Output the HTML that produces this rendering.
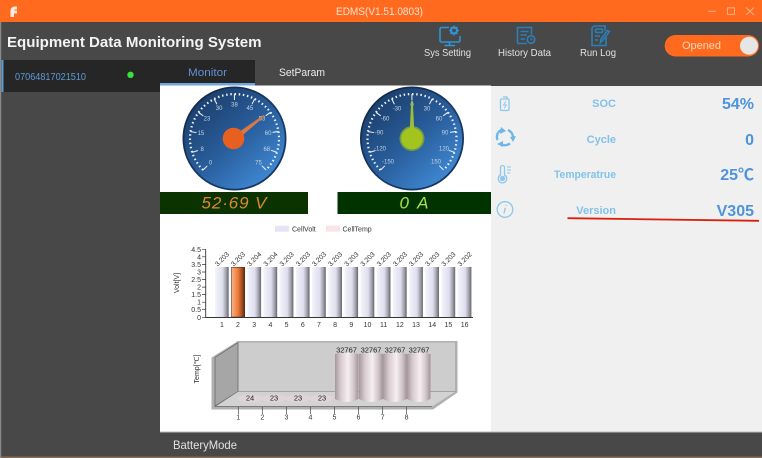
<!DOCTYPE html>
<html><head><meta charset="utf-8"><style>
html,body{margin:0;padding:0;background:#484848;overflow:hidden}
svg{display:block;filter:blur(.35px)}
text{font-family:"Liberation Sans",sans-serif}
.c{font-size:7px;fill:#333}
.m{text-anchor:middle}
.e{text-anchor:end}
.g{font-size:6px;fill:#c6d4e4;text-anchor:middle}
.l{font-size:11px;font-weight:bold;fill:#82c2ea;text-anchor:end}
.v{font-size:16px;font-weight:bold;fill:#4d94dc;text-anchor:end}
.n{font-size:10.5px;fill:#e2e2e2;text-anchor:middle}
</style></head><body>
<svg width="762" height="458" viewBox="0 0 762 458" xmlns="http://www.w3.org/2000/svg">
<defs>
<linearGradient id="gi" x1="0.15" y1="0.1" x2="0.85" y2="0.9"><stop offset="0" stop-color="#1c3f6c"/><stop offset="0.5" stop-color="#285c9a"/><stop offset="1" stop-color="#3f88d2"/></linearGradient>
<linearGradient id="go" x1="0.15" y1="0.1" x2="0.85" y2="0.9"><stop offset="0" stop-color="#12294a"/><stop offset="0.6" stop-color="#1b3c68"/><stop offset="1" stop-color="#16345e"/></linearGradient>
<linearGradient id="bar"><stop offset="0" stop-color="#f4f4fc"/><stop offset="0.55" stop-color="#dedeee"/><stop offset="0.8" stop-color="#a4a4b0"/><stop offset="1" stop-color="#66666e"/></linearGradient>
<linearGradient id="bar2"><stop offset="0" stop-color="#f8b488"/><stop offset="0.5" stop-color="#ee7a3a"/><stop offset="0.8" stop-color="#a04c20"/><stop offset="1" stop-color="#5a2a10"/></linearGradient>
<linearGradient id="cy"><stop offset="0" stop-color="#a8989c"/><stop offset="0.25" stop-color="#d8ccd0"/><stop offset="0.55" stop-color="#f6eef1"/><stop offset="0.8" stop-color="#d2c6ca"/><stop offset="1" stop-color="#a09498"/></linearGradient>
<g id="gb">
<circle r="52" fill="url(#go)"/>
<circle r="50.2" fill="url(#gi)"/>
<path d="M-31.5 31.5A44.5 44.5 0 1 1 31.5 31.5" pathLength="270" fill="none" stroke="#eef3f8" stroke-width="2.2" stroke-dasharray="1.9 3.5"/>
<circle r="41.5" fill="none" stroke="#eef3f8" stroke-width="6" pathLength="360" transform="rotate(134.2)" stroke-dasharray="1.4 25.6 1.4 25.6 1.4 25.6 1.4 25.6 1.4 25.6 1.4 25.6 1.4 25.6 1.4 25.6 1.4 25.6 1.4 25.6 1.4 88.6"/>
</g>
</defs>

<rect width="762" height="458" fill="#484848"/>
<rect y="456.5" width="762" height="1.5" fill="#8a6a55"/>
<rect width="762" height="22" fill="#ff6a1f"/>
<rect y="22" width="1.2" height="436" fill="#8a8a8a"/>

<path d="M10.5 17V11C10.5 8 12.5 6.5 15 6.5H17V9.5H15C14.2 9.5 14 10 14 10.5H17V13.5H14V17Z" fill="#fbeee0"/>
<text x="379.5" y="15" class="m" font-size="11" fill="#ffe2ce" textLength="87" lengthAdjust="spacingAndGlyphs">EDMS(V1.51.0803)</text>
<path d="M708 11.3H716" stroke="#ffb088" stroke-width="1"/>
<rect x="727.5" y="7.8" width="7" height="6.6" fill="none" stroke="#ffb088" stroke-width="1"/>
<path d="M746 7.5L754 15M754 7.5L746 15" stroke="#ffb088" stroke-width="1"/>

<text x="7" y="47" font-size="15.2" font-weight="bold" fill="#f4f4f4" textLength="254.5" lengthAdjust="spacingAndGlyphs">Equipment Data Monitoring System</text>

<!-- toolbar icons -->
<g fill="none" stroke="#2f96d6" stroke-width="1.6">
<path d="M449 27.5H441.5A1.5 1.5 0 0 0 440 29V40.5A1.5 1.5 0 0 0 441.5 42H458.5A1.5 1.5 0 0 0 460 40.5V36"/>
<path d="M449.5 42V45M444.5 45.5H455"/>
<circle cx="454" cy="30.5" r="3" stroke-width="2.2"/>
<path d="M454 25.5V27M454 34V35.5M449 30.5H450.5M457.5 30.5H459M450.5 27L451.6 28.1M456.4 32.9L457.5 34M457.5 27L456.4 28.1M451.6 32.9L450.5 34" stroke-width="1.3"/>
<g stroke="#2a7fb6">
<path d="M517.5 43.5V27.5H531.5V34.5M517.5 43.5H527"/>
<path d="M520.5 31.5H528.5M520.5 35H527M520.5 39H525"/>
<circle cx="531" cy="39.5" r="3.8"/>
<path d="M531 37.5V39.7H532.8" stroke-width="1"/>
<path d="M592 28V45.5H606V37M592 28Q593 26 596 26H605V31"/>
<rect x="595.5" y="29" width="7" height="3.4" rx="1"/>
<path d="M609.5 31.5L603 40L600.5 42.5L601 39L607.5 30.5Z"/>
<path d="M595 36H600M595 40H598"/>
</g>
</g>
<text x="447.5" y="56" class="n" textLength="47" lengthAdjust="spacingAndGlyphs">Sys Setting</text>
<text x="524.5" y="56" class="n" textLength="53" lengthAdjust="spacingAndGlyphs">History Data</text>
<text x="598" y="56" class="n" textLength="36" lengthAdjust="spacingAndGlyphs">Run Log</text>

<rect x="664.7" y="35" width="94.3" height="21.5" rx="10.75" fill="#ff6a1f"/>
<circle cx="749" cy="45.7" r="9" fill="#e6e6e6"/>
<text x="701.5" y="49" class="m" font-size="11" fill="#ffd8bc" textLength="39" lengthAdjust="spacingAndGlyphs">Opened</text>

<!-- sidebar & tabs -->
<rect x="1.5" y="60" width="158.5" height="32" fill="#262626"/>
<rect x="160" y="60" width="95" height="24" fill="#262626"/>
<rect x="1.5" y="60" width="2" height="32" fill="#5b9bd5"/>
<text x="15" y="80" font-size="10" fill="#5b9bd5" textLength="71" lengthAdjust="spacingAndGlyphs">07064817021510</text>
<circle cx="130.5" cy="74.8" r="3.2" fill="#3be03b"/>
<text x="207.5" y="76" class="m" font-size="11" fill="#5e92d4" textLength="39" lengthAdjust="spacingAndGlyphs">Monitor</text>
<text x="302" y="76" class="m" font-size="11" fill="#ececec" textLength="46" lengthAdjust="spacingAndGlyphs">SetParam</text>

<!-- content -->
<rect x="160" y="85.5" width="331" height="346.5" fill="#fff"/>
<rect x="160" y="83" width="95" height="2.5" fill="#6fa5dc"/>
<rect x="491" y="86" width="271" height="346" fill="#f0f0f0"/>
<rect x="160" y="431.5" width="602" height="1" fill="#bdbdbd"/>
<text x="205" y="449" class="m" font-size="12" fill="#e2e2e2" textLength="64" lengthAdjust="spacingAndGlyphs">BatteryMode</text>

<!-- gauge 1 -->
<g transform="translate(234.5 138.5)">
<use href="#gb"/>
<text class="g" x="-24" y="26">0</text><text class="g" x="-32.3" y="12.5">8</text><text class="g" x="-33.6" y="-3.3">15</text><text class="g" x="-27.5" y="-18">23</text><text class="g" x="-15.4" y="-28.3">30</text><text class="g" x="0" y="-32">38</text><text class="g" x="15.4" y="-28.3">45</text><text class="g" x="27.5" y="-18">53</text><text class="g" x="33.6" y="-3.3">60</text><text class="g" x="32.3" y="12.5">68</text><text class="g" x="24" y="26">75</text>
<path d="M-2 -2L29 -23.5L30 -22L2 2Z" fill="#d27a48"/>
<circle cx="-1" cy="0" r="10.8" fill="#e8601f"/>
</g>
<rect x="160" y="192" width="148" height="22" fill="#0a3300"/>
<text x="234" y="208.5" class="m" font-size="17" font-style="italic" fill="#dd8a2a" textLength="65" lengthAdjust="spacing">52·69 V</text>

<!-- gauge 2 -->
<g transform="translate(412 138.5)">
<use href="#gb"/>
<text class="g" x="-24" y="25">-150</text><text class="g" x="-32" y="12">-120</text><text class="g" x="-33" y="-4">-90</text><text class="g" x="-27" y="-18">-60</text><text class="g" x="-15" y="-28">-30</text><text class="g" x="0" y="-32">0</text><text class="g" x="15" y="-28">30</text><text class="g" x="27" y="-18">60</text><text class="g" x="33" y="-4">90</text><text class="g" x="32" y="12">120</text><text class="g" x="24" y="25">150</text>
<circle r="12.5" fill="#6f9a4a"/>
<path d="M-2.6 0L-0.8 -38H0.8L2.6 0Z" fill="#9cbf3a"/>
<circle r="10.8" fill="#a3c41f"/>
</g>
<rect x="337.5" y="192" width="153.5" height="22" fill="#013300"/>
<text x="414" y="208.5" class="m" font-size="17" font-style="italic" fill="#a8e050" textLength="29" lengthAdjust="spacing">0 A</text>

<!-- right panel -->
<g fill="none" stroke="#8cc8ec" stroke-width="1.3">
<rect x="500.5" y="99" width="8.5" height="11.5" rx="1.2"/><path d="M503 97H507V99"/><path d="M505.8 101.5L503.6 105H506.2L504.2 108.5" stroke-width="1"/>
<path d="M497.5 140A8 8 0 0 1 501 130M508 130A8 8 0 0 1 513 137M510 143.5A8 8 0 0 1 501 144" stroke="#6bb8e8" stroke-width="2.4"/>
<path d="M501 127L506 131L500 134ZM510 137L516 136L513 142ZM503 141V147L497 144Z" fill="#6bb8e8" stroke="none"/>
<path d="M500.5 175V167.5A2 2 0 0 1 504.5 167.5V175A4.2 4.2 0 1 1 500.5 175Z"/><circle cx="502.5" cy="178.5" r="2" fill="#8cc8ec"/><path d="M507 167H511M507 170H511M507 173H510" stroke-width="1"/>
<circle cx="505" cy="209.5" r="7.8"/><path d="M506 205V205.7M505.3 207.8L504 213.5" stroke-width="1.3"/>
</g>
<text class="l" x="616" y="107">SOC</text>
<text class="l" x="616" y="143">Cycle</text>
<text class="l" x="616" y="178" textLength="62" lengthAdjust="spacingAndGlyphs">Temperatrue</text>
<text class="l" x="616" y="214">Version</text>
<text class="v" x="754" y="109">54%</text>
<text class="v" x="754" y="145">0</text>
<text class="v" x="754" y="180" style='font-family:"Liberation Sans","Noto Sans CJK SC",sans-serif'>25℃</text>
<text class="v" x="754" y="216">V305</text>
<path d="M567.5 218.2L759 220.8" stroke="#d8200c" stroke-width="1.8"/>

<!-- legend -->
<rect x="275" y="225.7" width="14" height="6" fill="#e4e4f4"/>
<text class="c" x="292" y="231.5">CellVolt</text>
<rect x="326" y="225.7" width="14" height="6" fill="#fbe4e8"/>
<text class="c" x="342.5" y="231.5">CellTemp</text>

<!-- bar chart -->
<text class="c" transform="rotate(-90 179 283)" x="179" y="283" text-anchor="middle" font-size="7.5">Volt[V]</text>
<g fill="url(#bar)">
<rect x="215" y="267" width="13.7" height="50"/>
<rect x="247.4" y="267" width="13.7" height="50"/><rect x="263.5" y="267" width="13.7" height="50"/><rect x="279.7" y="267" width="13.7" height="50"/><rect x="295.9" y="267" width="13.7" height="50"/><rect x="312.1" y="267" width="13.7" height="50"/><rect x="328.3" y="267" width="13.7" height="50"/><rect x="344.4" y="267" width="13.7" height="50"/><rect x="360.6" y="267" width="13.7" height="50"/><rect x="376.8" y="267" width="13.7" height="50"/><rect x="393" y="267" width="13.7" height="50"/><rect x="409.2" y="267" width="13.7" height="50"/><rect x="425.3" y="267" width="13.7" height="50"/><rect x="441.5" y="267" width="13.7" height="50"/><rect x="457.7" y="267" width="13.7" height="50"/>
</g>
<rect x="231.5" y="267.3" width="13.2" height="49.7" fill="url(#bar2)" stroke="#5a3020" stroke-width=".6"/>
<path d="M205.7 249.3V317.5H473" fill="none" stroke="#333" stroke-width=".9"/>
<path d="M202 249.3H205.7M202 256.8H205.7M202 264.4H205.7M202 272H205.7M202 279.5H205.7M202 287.1H205.7M202 294.6H205.7M202 302.2H205.7M202 309.7H205.7M202 317.3H205.7" stroke="#333" stroke-width=".7"/>
<g>
<text class="c e" x="201" y="251.8">4.5</text><text class="c e" x="201" y="259.3">4</text><text class="c e" x="201" y="266.9">3.5</text><text class="c e" x="201" y="274.5">3</text><text class="c e" x="201" y="282">2.5</text><text class="c e" x="201" y="289.6">2</text><text class="c e" x="201" y="297.1">1.5</text><text class="c e" x="201" y="304.7">1</text><text class="c e" x="201" y="312.2">0.5</text><text class="c e" x="201" y="319.8">0</text>
</g>
<text class="c m" x="221.9" y="327">1</text><text class="c m" x="238" y="327">2</text><text class="c m" x="254.2" y="327">3</text><text class="c m" x="270.4" y="327">4</text><text class="c m" x="286.6" y="327">5</text><text class="c m" x="302.8" y="327">6</text><text class="c m" x="319" y="327">7</text><text class="c m" x="335.1" y="327">8</text><text class="c m" x="351.3" y="327">9</text><text class="c m" x="367.5" y="327">10</text><text class="c m" x="383.7" y="327">11</text><text class="c m" x="399.9" y="327">12</text><text class="c m" x="416" y="327">13</text><text class="c m" x="432.2" y="327">14</text><text class="c m" x="448.4" y="327">15</text><text class="c m" x="464.6" y="327">16</text>
<g font-size="6.8" fill="#333" text-anchor="middle">
<text transform="rotate(-45 221.9 259)" x="221.9" y="261.4">3.203</text>
<text transform="rotate(-45 238 259)" x="238" y="261.4">3.203</text>
<text transform="rotate(-45 254.2 259)" x="254.2" y="261.4">3.204</text>
<text transform="rotate(-45 270.4 259)" x="270.4" y="261.4">3.204</text>
<text transform="rotate(-45 286.6 259)" x="286.6" y="261.4">3.203</text>
<text transform="rotate(-45 302.8 259)" x="302.8" y="261.4">3.203</text>
<text transform="rotate(-45 319 259)" x="319" y="261.4">3.203</text>
<text transform="rotate(-45 335.1 259)" x="335.1" y="261.4">3.203</text>
<text transform="rotate(-45 351.3 259)" x="351.3" y="261.4">3.203</text>
<text transform="rotate(-45 367.5 259)" x="367.5" y="261.4">3.203</text>
<text transform="rotate(-45 383.7 259)" x="383.7" y="261.4">3.203</text>
<text transform="rotate(-45 399.9 259)" x="399.9" y="261.4">3.203</text>
<text transform="rotate(-45 416 259)" x="416" y="261.4">3.203</text>
<text transform="rotate(-45 432.2 259)" x="432.2" y="261.4">3.203</text>
<text transform="rotate(-45 448.4 259)" x="448.4" y="261.4">3.203</text>
<text transform="rotate(-45 464.6 259)" x="464.6" y="261.4">3.202</text>
</g>

<!-- 3D chart -->
<text class="c" transform="rotate(-90 199 369)" x="199" y="369" text-anchor="middle" font-size="7.5">Temp[℃]</text>
<path d="M238 341H457.5V392.5L433 409.5H211.5V357.5Z" fill="#b0b0b0"/>
<rect x="238" y="342.5" width="217" height="49" fill="#cdcdcd"/>
<path d="M215 357.5L238 342.5V391.5L215 406Z" fill="#a6a6a6" stroke="#555" stroke-width=".6"/>
<path d="M215 406.5L238 391.5H455.5L432 406.5Z" fill="#d2d2d2"/>
<path d="M238 342.5V391.5H455.5M238 391.5L215 406.5" fill="none" stroke="#777" stroke-width=".6"/>
<path d="M215 406.5H432" stroke="#666" stroke-width=".7"/>
<path d="M238.3 407V414M262.3 407V414M286.4 407V414M310.4 407V414M334.5 407V414M358.5 407V414M382.6 407V414M406.6 407V414" stroke="#444" stroke-width=".7"/>
<g fill="#dfd4d8"><ellipse cx="250" cy="398.5" rx="12" ry="4"/><ellipse cx="274" cy="398.5" rx="12" ry="4"/><ellipse cx="298" cy="398.5" rx="12" ry="4"/><ellipse cx="322" cy="398.5" rx="12" ry="4"/></g>
<g fill="url(#cy)">
<path d="M335 354Q347 351 358.5 354V399Q347 405 335 399Z"/>
<path d="M359 354Q371 351 383 354V399Q371 405 359 399Z"/>
<path d="M383 354Q395 351 407 354V399Q395 405 383 399Z"/>
<path d="M407 354Q419 351 430.5 354V399Q419 405 407 399Z"/>
</g>
<g font-size="7.5" fill="#222" text-anchor="middle">
<text x="250" y="400.5">24</text><text x="274" y="400.5">23</text><text x="298" y="400.5">23</text><text x="322" y="400.5">23</text>
<text x="346.5" y="352.5">32767</text><text x="371" y="352.5">32767</text><text x="395" y="352.5">32767</text><text x="419" y="352.5">32767</text>
</g>
<text class="c m" x="238.3" y="419.5">1</text><text class="c m" x="262.3" y="419.5">2</text><text class="c m" x="286.4" y="419.5">3</text><text class="c m" x="310.4" y="419.5">4</text><text class="c m" x="334.5" y="419.5">5</text><text class="c m" x="358.5" y="419.5">6</text><text class="c m" x="382.6" y="419.5">7</text><text class="c m" x="406.6" y="419.5">8</text>
</svg>
</body></html>
